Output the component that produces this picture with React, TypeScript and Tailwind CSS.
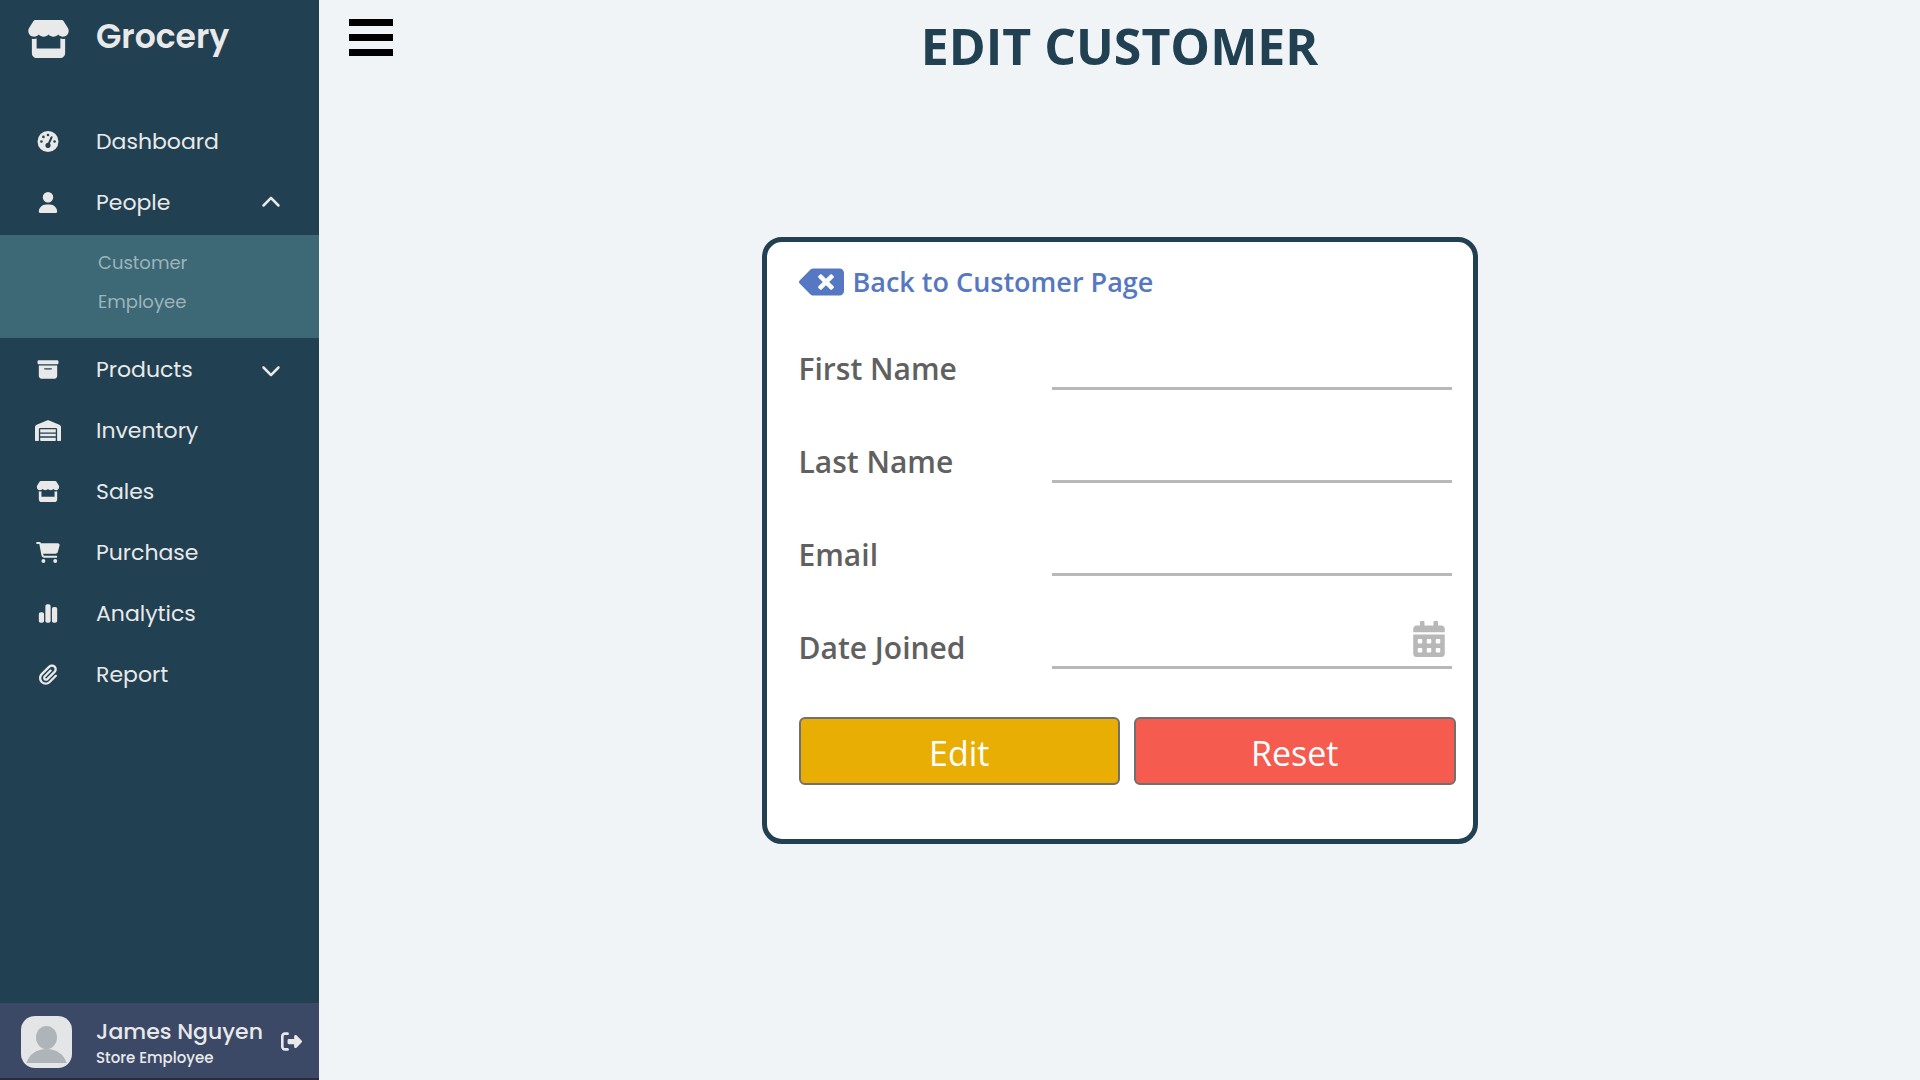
import type { ReactNode } from "react";
import {
  FaBoxArchive,
  FaCartShopping,
  FaChartSimple,
  FaChevronDown,
  FaChevronUp,
  FaGaugeHigh,
  FaPaperclip,
  FaRightFromBracket,
  FaStore,
  FaUser,
  FaWarehouse,
} from "react-icons/fa6";
import { FaBackspace, FaCalendarAlt } from "react-icons/fa";

function NavItem({ icon, label, trailing }: { icon: ReactNode; label: string; trailing?: ReactNode }) {
  return (
    <a href="#" className="flex h-[61px] items-center pr-[38px] text-[20px]">
      <span className="flex w-24 shrink-0 justify-center [&>svg]:h-[21px] [&>svg]:w-[26px]">{icon}</span>
      <span className="grow text-[22px]">{label}</span>
      {trailing}
    </a>
  );
}

function Sidebar() {
  return (
    <aside className="flex w-[319px] shrink-0 flex-col bg-[#214051] font-['Poppins','Inter',sans-serif] text-[#e9e9e9]">
      <a href="#" className="flex h-[78px] items-center">
        <span className="flex w-24 shrink-0 justify-center">
          <FaStore className="h-[38px] w-[43px]" />
        </span>
        <span className="pb-[5px] text-[33px] font-semibold">Grocery</span>
      </a>
      <nav className="flex grow flex-col pt-[33px]">
        <NavItem icon={<FaGaugeHigh />} label="Dashboard" />
        <NavItem icon={<FaUser />} label="People" trailing={<FaChevronUp />} />
        <div className="mt-[2px] mb-px flex h-[103px] shrink-0 flex-col bg-[#3d6876] pt-2 pl-[98px] text-[18px] text-[#9eb4bb]">
          <a href="#" className="flex h-[39px] items-center">Customer</a>
          <a href="#" className="flex h-[39px] items-center">Employee</a>
        </div>
        <NavItem icon={<FaBoxArchive />} label="Products" trailing={<FaChevronDown />} />
        <NavItem icon={<FaWarehouse />} label="Inventory" />
        <NavItem icon={<FaStore />} label="Sales" />
        <NavItem icon={<FaCartShopping />} label="Purchase" />
        <NavItem icon={<FaChartSimple />} label="Analytics" />
        <NavItem icon={<FaPaperclip />} label="Report" />
      </nav>
      <div className="flex h-[77px] items-center border-b-2 border-[#2a2c38] bg-[#3b4967] pt-[2px] pr-[17px] pl-[21px]">
        <svg viewBox="0 0 51 52" className="h-[52px] w-[51px] shrink-0" aria-hidden="true">
          <rect width="51" height="52" rx="14" fill="#e4e5e7" />
          <ellipse cx="25.5" cy="21.500" rx="10.500" ry="11.500" fill="#aeb4b7" />
          <path d="M5.500 47C8 38 16 33 25.500 33S43 38 45.500 47Z" fill="#aeb4b7" />
        </svg>
        <div className="flex grow flex-col pt-1 pl-6">
          <span className="text-[22px] leading-7 font-medium">James Nguyen</span>
          <span className="text-[15px] leading-6 font-medium">Store Employee</span>
        </div>
        <button type="button" aria-label="Log out">
          <FaRightFromBracket className="h-[21px] w-[21px]" />
        </button>
      </div>
    </aside>
  );
}

function Field({ id, label, children }: { id: string; label: string; children?: ReactNode }) {
  return (
    <div className="flex h-[93px] items-end pr-1">
      <label htmlFor={id} className="w-[253px] shrink-0 pb-px text-[30px] leading-10 font-semibold">
        {label}
      </label>
      <div className="flex h-12 min-w-0 grow items-start border-b-3 border-[#b8b8b8] pr-[5px]">
        <input id={id} type="text" className="h-full min-w-0 grow bg-transparent text-[28px] outline-none" />
        {children}
      </div>
    </div>
  );
}

export default function App() {
  return (
    <div className="flex min-h-screen bg-[#f0f4f7]">
      <Sidebar />
      <div className="flex min-w-0 grow flex-col font-['Segoe_UI','Open_Sans',sans-serif]">
        <header className="grid grid-cols-[1fr_auto_1fr] items-start pt-[18px]">
          <button type="button" aria-label="Toggle menu" className="mt-px ml-[30px] w-11">
            <svg viewBox="0 0 44 37" className="h-[37px] w-11">
              <path d="M0 0h44v7H0zM0 15h44v7H0zM0 30h44v7H0z" fill="#000" />
            </svg>
          </button>
          <h1 className="text-[50px] leading-14 font-bold text-[#214051]">EDIT CUSTOMER</h1>
        </header>
        <main className="flex grow flex-col items-center pt-[163px]">
          <form className="w-full max-w-[716px] rounded-[20px] border-5 border-[#214051] bg-white pr-[17px] pb-[54px] pl-8 text-[#606060]">
            <a href="#" className="flex h-[55px] items-start gap-[9px] pt-[22px] text-[#5677c2]">
              <FaBackspace className="h-9 w-[45px]" />
              <span className="text-[27px] leading-9 font-semibold">Back to Customer Page</span>
            </a>
            <Field id="first-name" label="First Name" />
            <Field id="last-name" label="Last Name" />
            <Field id="email" label="Email" />
            <Field id="date-joined" label="Date Joined">
              <button type="button" aria-label="Choose date" className="text-[#b8b8b8]">
                <FaCalendarAlt className="h-9 w-9" />
              </button>
            </Field>
            <div className="mt-12 grid grid-cols-2 gap-[14px] text-[34px] leading-none text-white">
              <button type="submit" className="h-[68px] rounded-md border-2 border-[#707070] bg-[#e8ae04] pt-1">
                Edit
              </button>
              <button type="reset" className="h-[68px] rounded-md border-2 border-[#707070] bg-[#f55b4f] pt-1">
                Reset
              </button>
            </div>
          </form>
        </main>
      </div>
    </div>
  );
}
